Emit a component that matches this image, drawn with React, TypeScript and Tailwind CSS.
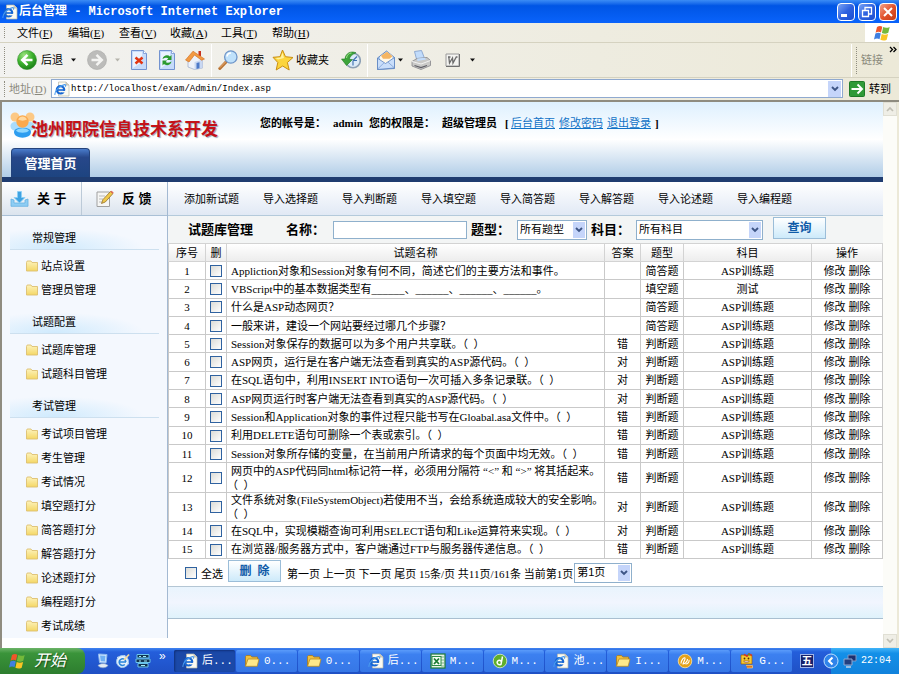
import type { ReactNode } from "react";

const menus = [
  ["文件", "F"],
  ["编辑", "E"],
  ["查看", "V"],
  ["收藏", "A"],
  ["工具", "T"],
  ["帮助", "H"],
];

const sections = [
  { title: "常规管理", items: ["站点设置", "管理员管理"] },
  { title: "试题配置", items: ["试题库管理", "试题科目管理"] },
  {
    title: "考试管理",
    items: [
      "考试项目管理",
      "考生管理",
      "考试情况",
      "填空题打分",
      "简答题打分",
      "解答题打分",
      "论述题打分",
      "编程题打分",
      "考试成绩",
    ],
  },
];

const navLinks = [
  "添加新试题",
  "导入选择题",
  "导入判断题",
  "导入填空题",
  "导入简答题",
  "导入解答题",
  "导入论述题",
  "导入编程题",
];

const questions = [
  { text: "Appliction对象和Session对象有何不同，简述它们的主要方法和事件。", answer: "", type: "简答题", subject: "ASP训练题" },
  { text: "VBScript中的基本数据类型有______、______、______、______。", answer: "", type: "填空题", subject: "测试" },
  { text: "什么是ASP动态网页？", answer: "", type: "简答题", subject: "ASP训练题" },
  { text: "一般来讲，建设一个网站要经过哪几个步骤？", answer: "", type: "简答题", subject: "ASP训练题" },
  { text: "Session对象保存的数据可以为多个用户共享联。（  ）", answer: "错", type: "判断题", subject: "ASP训练题" },
  { text: "ASP网页，运行是在客户端无法查看到真实的ASP源代码。（  ）", answer: "对", type: "判断题", subject: "ASP训练题" },
  { text: "在SQL语句中，利用INSERT INTO语句一次可插入多条记录联。（  ）", answer: "对", type: "判断题", subject: "ASP训练题" },
  { text: "ASP网页运行时客户端无法查看到真实的ASP源代码。（  ）", answer: "对", type: "判断题", subject: "ASP训练题" },
  { text: "Session和Application对象的事件过程只能书写在Gloabal.asa文件中。（  ）", answer: "错", type: "判断题", subject: "ASP训练题" },
  { text: "利用DELETE语句可删除一个表或索引。（  ）", answer: "错", type: "判断题", subject: "ASP训练题" },
  { text: "Session对象所存储的变量，在当前用户所请求的每个页面中均无效。（  ）", answer: "错", type: "判断题", subject: "ASP训练题" },
  { text: "网页中的ASP代码同html标记符一样，必须用分隔符 “<” 和 “>” 将其括起来。", tail: "（  ）", answer: "错", type: "判断题", subject: "ASP训练题" },
  { text: "文件系统对象(FileSystemObject)若使用不当，会给系统造成较大的安全影响。", tail: "（  ）", answer: "对", type: "判断题", subject: "ASP训练题" },
  { text: "在SQL中，实现模糊查询可利用SELECT语句和Like运算符来实现。（  ）", answer: "对", type: "判断题", subject: "ASP训练题" },
  { text: "在浏览器/服务器方式中，客户端通过FTP与服务器传递信息。（  ）", answer: "错", type: "判断题", subject: "ASP训练题" },
];

const tasks = [
  { icon: <IePage />, label: "后...", active: true },
  { icon: <TaskFolder />, label: "0..." },
  { icon: <TaskFolder />, label: "0..." },
  { icon: <IePage />, label: "后..." },
  { icon: <Excel />, label: "M..." },
  { icon: <Dreamweaver />, label: "M..." },
  { icon: <IePage />, label: "池..." },
  { icon: <TaskFolder />, label: "I..." },
  { icon: <Fireworks />, label: "M..." },
  { icon: <Face />, label: "G..." },
];

/* ---------- icons ---------- */

function IePage() {
  return (
    <svg className="size-4 shrink-0" viewBox="0 0 16 16">
      <path d="M4.500 1h7.500l3 3v11H4.500z" fill="#fbfaf2" stroke="#b9b8a8" strokeWidth=".7" />
      <path d="M12 1v3h3" fill="#d8d8cc" stroke="#a9a898" strokeWidth=".6" />
      <circle cx="6.500" cy="8.800" r="3.700" fill="none" stroke="#1767d2" strokeWidth="2.200" />
      <path d="M8 9.800h4v1.600H8z" fill="#fbfaf2" />
      <path d="M3 9h7.800" stroke="#1767d2" strokeWidth="1.600" />
      <path d="M1 13.800C.300 10.500 5 4.800 10.500 3.600c1.200-.1 1.500.8.8 2" fill="none" stroke="#4a9bee" strokeWidth="1.100" />
    </svg>
  );
}

function TaskFolder() {
  return (
    <svg className="size-4 shrink-0" viewBox="0 0 16 16">
      <path d="M1.500 13V3.500l1-1h4l1.300 1.500h5.700V6" fill="#f0c040" stroke="#a8791a" strokeWidth=".8" />
      <path d="M1.500 13.300 4 6h11l-1.800 7.300z" fill="#ffe98a" stroke="#b88a22" strokeWidth=".8" />
    </svg>
  );
}

function Excel() {
  return (
    <svg className="size-4 shrink-0" viewBox="0 0 16 16">
      <rect x="1" y="1" width="14" height="14" fill="#e9f4e6" stroke="#1f7a38" strokeWidth="1.200" />
      <path d="M11 4h3M11 7h3M11 10h3M11 13h3" stroke="#7ab48a" />
      <rect x="2" y="3.500" width="9" height="9" fill="#f7fff5" stroke="#2d8a45" />
      <path d="M4 5.500 9 11M9 5.500 4 11" stroke="#1c7a33" strokeWidth="1.800" />
    </svg>
  );
}

function Dreamweaver() {
  return (
    <svg className="size-4 shrink-0" viewBox="0 0 16 16">
      <circle cx="8" cy="8" r="6.800" fill="#5fae2c" stroke="#dff0c8" strokeWidth=".8" />
      <path d="M10.500 3.500 9 11.500C5 12.500 4 8.500 6.500 7.500c1.200-.5 2.300 0 2.600 1" fill="none" stroke="#fff" strokeWidth="1.500" />
    </svg>
  );
}

function Fireworks() {
  return (
    <svg className="size-4 shrink-0" viewBox="0 0 16 16">
      <circle cx="8" cy="8" r="6.800" fill="#e5a21a" stroke="#fbe6a8" strokeWidth=".8" />
      <path d="M4 10.500C4 7 7 4 8 5c.8 1-1.600 3.500-2 6 2-.2 4.500-2.500 4.500-5M8.500 11c2.500 0 4-2.500 3.500-4" fill="none" stroke="#fff" strokeWidth="1.100" />
    </svg>
  );
}

function Face() {
  return (
    <svg className="size-4 shrink-0" viewBox="0 0 16 16">
      <path d="M2 2h4l2 1.500L10 1l3 1.500V11H2z" fill="#f7c92c" stroke="#9a5a10" strokeWidth=".7" />
      <path d="M5 1.500 8 3l2-2 3 1.500" stroke="#d63a20" strokeWidth="1.500" fill="none" />
      <path d="M9 1.200l2 1" stroke="#3fa33a" strokeWidth="1.500" />
      <circle cx="5.500" cy="5.500" r=".9" fill="#5a2d08" />
      <circle cx="9.500" cy="5.500" r=".9" fill="#5a2d08" />
      <path d="M4.500 8c1.500 2 4.500 2 6 0z" fill="#fff" stroke="#8a3a10" strokeWidth=".6" />
      <path d="M7 12.500h6.500V15H8" fill="#e0761c" stroke="#f4d080" strokeWidth=".7" />
    </svg>
  );
}

function WinFlag({ className }: { className: string }) {
  return (
    <svg className={className} viewBox="0 0 18 17">
      <path d="M4 2.500C6 1 8 1.300 9.300 2.200L8 8C6.500 7 4.500 7 2.600 8.200z" fill="#f0562a" />
      <path d="M10.200 2.600c2 1 4.200 1 6.500-.2L15.300 8.300c-2.300 1.200-4.500 1-6.400.1z" fill="#74b93a" />
      <path d="M2.400 9C4.400 7.900 6.400 7.900 7.800 8.900L6.500 14.700C5 13.700 3 13.700 1 14.900z" fill="#3f7fe0" />
      <path d="M8.700 9.400c2 1 4.200 1 6.400 0l-1.400 5.800c-2.200 1.200-4.400 1-6.300 0z" fill="#f9c524" />
    </svg>
  );
}

function BackIcon() {
  return (
    <svg className="size-5" viewBox="0 0 20 20">
      <defs>
        <radialGradient id="back" cx=".35" cy=".25" r=".8">
          <stop offset="0" stopColor="#9be27f" />
          <stop offset=".55" stopColor="#3bb02c" />
          <stop offset="1" stopColor="#1b7d18" />
        </radialGradient>
      </defs>
      <circle cx="10" cy="10" r="9.500" fill="url(#back)" stroke="#2d8f27" strokeWidth=".6" />
      <path d="M10.500 4.800 5.200 10l5.300 5.200M5.500 10H15.500" fill="none" stroke="#fff" strokeWidth="2.500" />
    </svg>
  );
}

function ForwardIcon() {
  return (
    <svg className="size-5" viewBox="0 0 20 20">
      <circle cx="10" cy="10" r="9.500" fill="#bcbcba" stroke="#a8a8a6" strokeWidth=".6" />
      <path d="M9.500 4.800 14.800 10l-5.300 5.200M14.500 10H4.500" fill="none" stroke="#f4f4f2" strokeWidth="2.500" />
    </svg>
  );
}

function PageIcon({ children }: { children: ReactNode }) {
  return (
    <svg className="h-5 w-4" viewBox="0 0 16 20">
      <path d="M.5.500h12l3 3v16H.5z" fill="#c6dbfa" stroke="#7393d0" />
      <path d="M2 2h9v10L2 18z" fill="#f3f8ff" opacity=".8" />
      <path d="M12.500.500v3h3" fill="#fff" stroke="#7393d0" strokeWidth=".8" />
      {children}
    </svg>
  );
}

function HomeIcon() {
  return (
    <svg className="size-5" viewBox="0 0 20 20">
      <path d="M13.500 1h2.500v5h-2.500z" fill="#c8321c" />
      <path d="M3 10 10 3.500l7.500 6V18l-8 1.500L3 17z" fill="#eef2fa" stroke="#8a9cc0" strokeWidth=".6" />
      <path d="M9.500 12 17.500 9.500V18l-8 1.500z" fill="#c9d8f2" />
      <path d="M11.500 13l3-.7v6l-3 .7z" fill="#4d79c8" />
      <path d="M.5 10 8 1.200 19.500 9l-3 1.200L9.500 5 4 12z" fill="#f39a42" stroke="#cc6a1a" strokeWidth=".6" />
    </svg>
  );
}

function SearchIcon() {
  return (
    <svg className="size-5" viewBox="0 0 20 20">
      <path d="M8 12 1.800 18.500" stroke="#b87333" strokeWidth="3" strokeLinecap="round" />
      <path d="M8 11.500 2 17.500" stroke="#edb27c" strokeWidth="1" strokeLinecap="round" />
      <circle cx="12.800" cy="7" r="6.200" fill="#bfe1fb" stroke="#6f95c8" strokeWidth="1.300" />
      <path d="M9 6.500a4 4 0 0 1 4-3.500" stroke="#fff" strokeWidth="1.700" fill="none" />
    </svg>
  );
}

function StarIcon() {
  return (
    <svg className="size-[22px]" viewBox="0 0 22 22">
      <path d="M10.500 1l3 6.700 7.500.8-5.600 5 1.800 7.500-6.500-4-6.500 4 1.600-7.500L1 8.300l7-.6z" fill="#fcd53c" stroke="#c98e12" strokeLinejoin="round" />
      <path d="M10.500 3.500 12 9l-6 1.500L3.500 9l5.200-.5z" fill="#fff2a0" />
    </svg>
  );
}

function HistoryIcon() {
  return (
    <svg className="size-5" viewBox="0 0 20 20">
      <circle cx="12" cy="10.500" r="7.300" fill="#dcebf8" stroke="#8da0b4" strokeWidth="1.600" />
      <path d="M12 10.500 16 6.500M12 10.500h4M12 10.500v5" stroke="#3b6fb0" strokeWidth="1.100" />
      <path d="M15 2.800C9.500.5 4.500 3.500 4 9H.5l5 6.500L11.500 9.500H8.300C8.800 6.500 11 4.500 15 2.800z" fill="#3da43a" stroke="#1c7a22" strokeWidth=".6" />
      <path d="M5.500 8c.2-3 2.500-5 5-5" stroke="#9fe08a" fill="none" />
    </svg>
  );
}

function MailIcon() {
  return (
    <svg className="size-5" viewBox="0 0 20 20">
      <path d="M1.500 8 10.500 1l8 6.500v11l-17 1z" fill="#a8c8f0" stroke="#5d84bf" strokeWidth=".9" />
      <path d="M4 6.500 11 1.800l5.500 4.500V11l-6.300 4L4 12z" fill="#fff8e8" />
      <path d="M5 5.800 11 1.800l5.500 4.400-3 2.600H7z" fill="#f5b562" />
      <path d="M1.500 8.200 9.500 13.500 18.500 7.500V18l-17 1.500z" fill="#c9defa" stroke="#5d84bf" strokeWidth=".8" />
      <path d="M1.700 19 8 12.800M18.300 17.800 12 12.200" stroke="#7da0d4" strokeWidth=".8" />
    </svg>
  );
}

function PrintIcon() {
  return (
    <svg className="size-5" viewBox="0 0 20 20">
      <path d="M3.500 1.500 10.500.500 14 9.500 6 11z" fill="#c2dcfb" stroke="#7f9cc9" strokeWidth=".8" />
      <path d="M1 11.500 6 8.500l10-1 3.500 3v5L10 19.500l-9-3.500z" fill="#c9c9c7" stroke="#85858a" strokeWidth=".8" />
      <path d="M6 8.500 14 7.700 15 9.500 6.500 11z" fill="#c2dcfb" />
      <path d="M1 11.500 10 14l9.500-3.500" fill="none" stroke="#f2f2f2" />
      <path d="M3.500 15.500 10 17.500l6-2" stroke="#5f5f66" strokeWidth="1.200" fill="none" />
    </svg>
  );
}

function WordIcon() {
  return (
    <svg className="h-4 w-[15px]" viewBox="0 0 15 16">
      <path d="M1 2h13v12H1z" fill="#f3f3f0" stroke="#9a9a9a" />
      <path d="M14.500 2v12.500H1" stroke="#6f6f6f" fill="none" />
      <path d="M3 5h2.500M3.800 5 4.500 11l3-5 .5 5 3.300-6h1.200" stroke="#6a6a6a" strokeWidth="1.300" fill="none" />
    </svg>
  );
}

function Caret({ dim }: { dim?: boolean }) {
  return (
    <svg className="h-1 w-[5px]" viewBox="0 0 5 4">
      <path d="M0 .5h5L2.500 3.500z" fill={dim ? "#b5b4ac" : "#111"} />
    </svg>
  );
}

function Chevron() {
  return (
    <svg className="size-2" viewBox="0 0 8 8">
      <path d="M1 2l3 3 3-3" fill="none" stroke="#3d5585" strokeWidth="1.900" />
    </svg>
  );
}

function SideFolder() {
  return (
    <svg className="h-3 w-3" viewBox="0 0 12 12">
      <defs>
        <linearGradient id="folder" x1="0" y1="0" x2="0" y2="1">
          <stop offset="0" stopColor="#fdf3bd" />
          <stop offset="1" stopColor="#f4d765" />
        </linearGradient>
      </defs>
      <path d="M.5 2.500 1.200 1H5l1 1.500h5.500v8.500H.5z" fill="url(#folder)" stroke="#dcbf70" strokeWidth=".9" />
    </svg>
  );
}

function PeopleLogo() {
  return (
    <svg className="h-[26px] w-[25px] shrink-0" viewBox="0 0 25 26">
      <path d="M.5 14c0-5 9-6 10-1l-2 6C4 19 .5 18 .5 14zM24.500 14c0-5-9-6-10-1l2 6c4.500 0 8-1 8-5z" fill="#a9dcfc" />
      <circle cx="5" cy="5" r="4.500" fill="#fcc985" />
      <circle cx="20" cy="5" r="4.500" fill="#fcc985" />
      <path d="M4 20c0-6 17-6 17 0 0 7.500-17 7.500-17 0z" fill="#2d9df0" />
      <path d="M6 18.500c3-3 10-3 13 0-2 3-11 3-13 0z" fill="#8fd8ff" />
      <circle cx="12.500" cy="9.500" r="6.200" fill="#fba94c" />
      <path d="M8 7.500c2-4 7-4 9 0-3 1.500-6 1.500-9 0z" fill="#ffd9a0" />
    </svg>
  );
}

function DownloadIcon() {
  return (
    <svg className="h-4 w-[19px]" viewBox="0 0 19 16">
      <path d="M1 8v7.300h17V8l-3 1v3H4V9z" fill="#8ecdf4" stroke="#65b1e2" strokeWidth=".8" />
      <path d="M7.500.500h4v6H15L9.500 12 4 6.500h3.500z" fill="#3fa3e2" stroke="#8dd0f6" strokeWidth=".8" />
    </svg>
  );
}

function NoteIcon() {
  return (
    <svg className="size-[18px]" viewBox="0 0 18 18">
      <path d="M1 2h12.500v14.500H1z" fill="#f6f6f4" stroke="#a0a0a0" />
      <path d="M3 6h6M3 9h4M3 12h3" stroke="#bbb" />
      <path d="M5.500 13.500 7 9.500 14.500 1.500l2.500 2L9.300 12z" fill="#f0c94a" stroke="#94702a" strokeWidth=".8" />
      <path d="M14.200 1.700 15.500.800 17.700 2.600 16.600 3.800z" fill="#e06a5a" />
    </svg>
  );
}

/* ---------- small parts ---------- */

function Separator() {
  return <span className="h-full w-px border-r border-white bg-[#cfccba]" />;
}

function Dropdown({ label, value, className }: { label: string; value: string; className: string }) {
  return (
    <span className={`relative inline-flex h-5 ${className}`}>
      <select
        aria-label={label}
        className="h-full w-full appearance-none border border-[#8fb0cc] bg-white pl-0.5 font-['Liberation_Sans','Noto_Sans_CJK_SC',sans-serif] text-[11px] leading-none text-black outline-none"
      >
        <option>{value}</option>
      </select>
      <span className="pointer-events-none absolute top-0.5 right-0.5 bottom-0.5 flex w-3 items-center justify-center bg-[#c5d5fa]">
        <Chevron />
      </span>
    </span>
  );
}

function Tick({ label, id }: { label?: string; id?: string }) {
  return (
    <input
      id={id}
      type="checkbox"
      aria-label={label}
      className="size-3 shrink-0 appearance-none border border-[#2f62a0] bg-linear-to-br from-[#dcdcd7] to-white align-middle"
    />
  );
}

/* ---------- browser chrome ---------- */

function TitleBar() {
  return (
    <header className="flex h-[23px] shrink-0 items-center bg-linear-to-b from-[#3b8cf5] via-[#0055e5] via-25% to-[#0a63fb] pr-0.5 pl-0.5 text-white">
      <IePage />
      <h1 className="flex-1 pl-px font-['Liberation_Mono','Noto_Sans_CJK_SC',monospace] text-[12px] font-bold whitespace-pre">
        后台管理 - Microsoft Internet Explorer
      </h1>
      <div className="flex gap-[3px]">
        <button aria-label="最小化" className="flex size-[18px] items-end rounded-sm border border-white bg-linear-to-br from-[#7ba3f5] via-[#2f62e0] to-[#1c4fd0] p-[3px]">
          <span className="h-[3px] w-[6px] bg-white" />
        </button>
        <button aria-label="还原" className="flex size-[18px] items-center justify-center rounded-sm border border-white bg-linear-to-br from-[#7ba3f5] via-[#2f62e0] to-[#1c4fd0]">
          <svg className="size-3" viewBox="0 0 12 12" fill="none" stroke="#fff">
            <path d="M4 4V1.500h6.500V8H8" strokeWidth="1.300" />
            <path d="M1.500 4.500h6v6h-6z" strokeWidth="1.300" />
          </svg>
        </button>
        <button aria-label="关闭" className="flex size-[18px] items-center justify-center rounded-sm border border-white bg-linear-to-br from-[#f0a088] via-[#e2532c] to-[#c63a12]">
          <svg className="size-3" viewBox="0 0 12 12">
            <path d="M2 2l8 8M10 2l-8 8" stroke="#fff" strokeWidth="2" />
          </svg>
        </button>
      </div>
    </header>
  );
}

function MenuBar() {
  return (
    <nav className="flex h-5 shrink-0 border-b border-[#d5d2c0] pl-1">
      <span className="my-1 w-px border-l border-dotted border-[#8f8d80]" />
      <ul className="flex flex-1 items-center pl-3 font-['Liberation_Serif','Noto_Sans_CJK_SC',serif]">
        {menus.map(([name, key]) => (
          <li key={key} className="w-[51px]">
            <button>
              {name}(<u>{key}</u>)
            </button>
          </li>
        ))}
      </ul>
      <div className="flex w-[34px] items-center justify-center bg-white">
        <WinFlag className="size-[18px]" />
      </div>
    </nav>
  );
}

function ToolBar() {
  return (
    <div className="flex h-[35px] shrink-0 items-center border-b border-[#d5d2c0] pl-1">
      <span className="h-[27px] w-px border-l border-dotted border-[#8f8d80]" />
      <button className="ml-3 flex items-center gap-1">
        <BackIcon />
        后退
      </button>
      <span className="ml-2 flex w-[14px]"><Caret /></span>
      <button aria-label="前进" className="ml-0.5"><ForwardIcon /></button>
      <span className="ml-2 flex w-4"><Caret dim /></span>
      <button aria-label="停止">
        <PageIcon>
          <path d="M4.500 7.500l7 6M11.500 7.500l-7 6" stroke="#e23512" strokeWidth="2.500" />
        </PageIcon>
      </button>
      <button aria-label="刷新" className="ml-3">
        <PageIcon>
          <path d="M3.500 9c.8-4 5.500-4.500 7.500-2.500l1.500-1.500V10H7.800l1.500-1.600C8 7.200 6 7.500 3.500 9z" fill="#2b9a2e" />
          <path d="M12.500 11.500c-.8 4-5.500 4.500-7.500 2.500l-1.500 1.500v-5h4.700L6.700 12c1.300 1.200 3.300 1 5.800-.5z" fill="#2b9a2e" />
        </PageIcon>
      </button>
      <button aria-label="主页" className="ml-2.5"><HomeIcon /></button>
      <span className="ml-1.5 flex h-[33px]"><Separator /></span>
      <button className="ml-1.5 flex items-center gap-1">
        <SearchIcon />
        搜索
      </button>
      <button className="ml-2 flex items-center gap-0.5">
        <StarIcon />
        收藏夹
      </button>
      <button aria-label="历史" className="ml-3"><HistoryIcon /></button>
      <span className="ml-1.5 flex h-[33px]"><Separator /></span>
      <button aria-label="邮件" className="ml-2 flex items-center gap-0.5">
        <MailIcon />
        <Caret />
      </button>
      <button aria-label="打印" className="ml-2"><PrintIcon /></button>
      <button aria-label="编辑" className="ml-3.5 flex items-center gap-2.5">
        <WordIcon />
        <Caret />
      </button>
      <div className="ml-auto flex h-[33px] items-center gap-1">
        <Separator />
        <span className="h-[27px] w-px border-l border-dotted border-[#8f8d80]" />
        <span className="text-[#8b897c]">链接</span>
        <svg className="mx-0.5 mt-0.5 size-2 self-start" viewBox="0 0 8 8">
          <path d="M1 1l2.500 2.500L1 6M4.500 1 7 3.500 4.500 6" fill="none" stroke="#000" strokeWidth="1.300" />
        </svg>
      </div>
    </div>
  );
}

function AddressBar() {
  return (
    <div className="flex h-[21px] shrink-0 items-center py-px pl-1">
      <span className="h-4 w-px border-l border-dotted border-[#8f8d80]" />
      <label htmlFor="address" className="w-[46px] pl-1 font-['Liberation_Serif','Noto_Sans_CJK_SC',serif] text-[#8b897c]">
        地址(<u>D</u>)
      </label>
      <div className="flex h-[19px] flex-1 items-center border border-[#8fa9cf] bg-white pl-0.5">
        <IePage />
        <input
          id="address"
          defaultValue="http://localhost/exam/Admin/Index.asp"
          className="w-full flex-1 pl-px font-['Liberation_Mono',monospace] text-[9px] text-black outline-none"
        />
        <span className="mr-px flex h-4 w-[13px] items-center justify-center bg-[#c5d5fa]">
          <Chevron />
        </span>
      </div>
      <button className="flex items-center gap-1 pr-2 pl-1.5">
        <svg className="size-4" viewBox="0 0 16 16">
          <rect x=".5" y=".5" width="15" height="15" rx="1" fill="#2f9a38" stroke="#1e7a28" />
          <path d="M2.500 8H13M8.500 3.500 13 8l-4.500 4.500" fill="none" stroke="#fff" strokeWidth="1.900" />
        </svg>
        转到
      </button>
    </div>
  );
}

/* ---------- page ---------- */

function PageHeader() {
  return (
    <div className="border-b-[5px] border-[#1f3c70] bg-linear-to-b from-[#def0fe] via-white via-50% to-[#b1cde7]">
      <div className="flex h-[46px] items-start pl-2">
        <div className="flex w-[250px] pt-2.5">
          <PeopleLogo />
          <span className="-ml-1 pt-2 text-[17px] leading-5 font-bold whitespace-nowrap text-[#c41218] [text-shadow:1px_1px_1px_#9aa8b8]">
            池州职院信息技术系开发
          </span>
        </div>
        <p className="flex pt-3.5 font-['Liberation_Serif','Noto_Sans_CJK_SC',serif] font-bold">
          <span className="w-[73px]">您的帐号是：</span>
          <span className="w-9">admin</span>
          <span className="w-[73px]">您的权限是：</span>
          <span className="w-[63px]">超级管理员</span>
          <span className="w-1.5">[</span>
          {["后台首页", "修改密码", "退出登录"].map((t) => (
            <a key={t} href="#" className="mr-1 font-normal text-[#1173c7] underline">
              {t}
            </a>
          ))}
          ]
        </p>
      </div>
      <div className="flex h-[29px] pl-[9px]">
        <a href="#" className="flex w-[79px] items-center justify-center rounded-t border border-b-0 border-[#24437c] bg-linear-to-b from-[#4a7ccc] via-[#27478a] via-30% to-[#1d4480] pt-0.5 text-[13px] font-bold text-white">
          管理首页
        </a>
      </div>
    </div>
  );
}

function Sidebar() {
  return (
    <aside className="flex w-[166px] shrink-0 flex-col border-r border-[#a3b9d2] bg-[#f4f8fe]">
      <div className="flex h-[34px] border-b border-[#a9c0d6] bg-linear-to-b from-white to-[#dbe4ee] text-[13px] font-bold">
        <a href="#" className="flex w-20 items-center gap-2 border-r border-[#bccad8] pl-2 whitespace-pre">
          <DownloadIcon />
          关 于
        </a>
        <a href="#" className="flex flex-1 items-center gap-2 pl-3.5 whitespace-pre">
          <NoteIcon />
          反 馈
        </a>
      </div>
      <div className="pt-0.5">
        {sections.map((s) => (
          <section key={s.title} className="pt-2">
            <h2 className="mx-2 flex h-6 items-center border-b border-[#cde0ef] bg-[radial-gradient(ellipse_60%_90%_at_30%_100%,#cfeafd,#f4f8fe)] pl-[22px]">
              {s.title}
            </h2>
            <ul className="pt-1">
              {s.items.map((t) => (
                <li key={t}>
                  <a href="#" className="flex h-6 items-center gap-[3px] pl-6">
                    <SideFolder />
                    {t}
                  </a>
                </li>
              ))}
            </ul>
          </section>
        ))}
      </div>
    </aside>
  );
}

function FilterBar() {
  return (
    <form className="flex h-[27px] items-center bg-[#f3f5f5] pl-5 text-[13px] font-bold">
      <h2 className="w-[98px]">试题库管理</h2>
      <label htmlFor="name" className="w-[47px] whitespace-nowrap">名称：</label>
      <input id="name" className="h-[18px] w-[134px] border border-[#8fb0cc] bg-white px-1 font-normal" />
      <span className="ml-1 w-[46px] whitespace-nowrap">题型：</span>
      <Dropdown label="题型" value="所有题型" className="w-[70px] font-normal" />
      <span className="ml-1 w-[45px] whitespace-nowrap">科目：</span>
      <Dropdown label="科目" value="所有科目" className="w-[127px] font-normal" />
      <button type="button" className="mb-1 ml-2.5 h-[22px] w-[53px] border border-[#9bbdd8] bg-linear-to-b from-white to-[#cdeafa] text-[12px] text-[#0f5ba8]">
        查询
      </button>
    </form>
  );
}

function QuestionTable() {
  return (
    <table className="h-[316px] w-full table-fixed border-collapse text-center leading-[14px] [&_td]:border [&_td]:border-[#c9c9c9] [&_td]:p-0 [&_th]:border [&_th]:border-[#d3d3d3] [&_th]:p-0 [&_th]:font-normal">
      <colgroup>
        <col className="w-[37px]" />
        <col className="w-[21px]" />
        <col />
        <col className="w-9" />
        <col className="w-[43px]" />
        <col className="w-32" />
        <col className="w-[71px]" />
      </colgroup>
      <thead>
        <tr className="h-[18px] bg-linear-to-b from-white to-[#ececec]">
          {["序号", "删", "试题名称", "答案", "题型", "科目", "操作"].map((h) => (
            <th key={h}>{h}</th>
          ))}
        </tr>
      </thead>
      <tbody className="bg-white">
        {questions.map((q, i) => (
          <tr key={i} className="h-[18px]">
            <td>{i + 1}</td>
            <td className="leading-none"><Tick label={`选择第${i + 1}题`} /></td>
            <td className="text-left">
              <span className="block pl-1 whitespace-pre">{q.text}</span>
              {q.tail && <span className="block whitespace-pre">{q.tail}</span>}
            </td>
            <td>{q.answer}</td>
            <td>{q.type}</td>
            <td>{q.subject}</td>
            <td className="whitespace-pre">
              <a href="#">修改</a> <a href="#">删除</a>
            </td>
          </tr>
        ))}
      </tbody>
    </table>
  );
}

function Pager() {
  return (
    <div className="flex h-7 items-center border-b border-[#b4c6d4] pl-[17px]">
      <Tick id="all" />
      <label htmlFor="all" className="w-[31px] shrink-0 pt-0.5 pl-1 whitespace-nowrap">全选</label>
      <button className="mb-1 h-[22px] w-[53px] shrink-0 border border-[#9bbdd8] bg-linear-to-b from-white to-[#cdeafa] text-[12px] font-bold whitespace-pre text-[#0f5ba8]">
        删  除
      </button>
      <p className="mr-px ml-1.5 pt-0.5 whitespace-nowrap">
        <a href="#">第一页</a> <a href="#">上一页</a> <a href="#">下一页</a> <a href="#">尾页</a> 15条/页 共11页/161条 当前第1页
      </p>
      <Dropdown label="页码" value="第1页" className="w-[58px]" />
    </div>
  );
}

function TaskBar() {
  return (
    <footer className="flex h-[26px] shrink-0 bg-linear-to-b from-[#3f83f0] via-[#245edb] via-15% to-[#1f50c4] text-white">
      <button className="flex w-[85px] items-center gap-2 rounded-r-lg bg-linear-to-b from-[#6cb468] via-[#3a943a] via-20% to-[#2d7d2e] pl-2 text-[16px] italic [text-shadow:1px_1px_1px_#1d4f1d]">
        <WinFlag className="size-[18px]" />
        开始
      </button>
      <div className="flex w-[89px] items-center gap-1 pl-2.5">
        <svg className="size-4" viewBox="0 0 16 16">
          <path d="M3.500 1 12 1.500 11 10l-6.500-.5z" fill="#d9ecff" stroke="#8cb8ee" />
          <path d="M5 2.500l5.500.3L10 8.500l-4.300-.3z" fill="#6fb0f4" />
          <path d="M3 12.500c2-2.500 8-2.500 10 0-2 3-8 3-10 0z" fill="#e4ecf4" stroke="#8aa4c4" strokeWidth=".6" />
        </svg>
        <svg className="size-4" viewBox="0 0 16 16">
          <path d="M2 4l8-2 4 9-8 4z" fill="#f2f8fd" />
          <circle cx="7.500" cy="8.500" r="6" fill="#e8f2fb" stroke="#9cc6ee" />
          <path d="M4.500 9h6.500M10.800 9a3.300 3.300 0 1 0-1 2.500" stroke="#2a86dc" strokeWidth="1.600" fill="none" />
          <path d="M9 7l5-5.500" stroke="#f2d59a" strokeWidth="1.800" />
        </svg>
        <svg className="size-4" viewBox="0 0 16 16">
          <path d="M2 1.500h12v3.500H2zM1 6h14v3.500H1zM3 10.500h10V14H3z" fill="#12324f" stroke="#6ac4ea" />
          <path d="M4 3.500h2M8 3.500h3M4 8h2M9 8h3M6 12.500h4" stroke="#a5ecf6" />
        </svg>
        <span className="ml-1 self-start text-[12px] leading-4">»</span>
      </div>
      <ul className="flex flex-1 gap-px py-0.5 font-['Liberation_Mono','Noto_Sans_CJK_SC',monospace]">
        {tasks.map((t, i) => (
          <li key={i} className="flex min-w-0 flex-1">
            <button
              className={`flex flex-1 items-center gap-1 rounded-xs pl-2 ${
                t.active ? "bg-[#1b49a8] shadow-[inset_1px_1px_2px_#10307c]" : "bg-linear-to-b from-[#5a9bfa] via-[#3c80f0] via-20% to-[#3677e6]"
              }`}
            >
              {t.icon}
              {t.label}
            </button>
          </li>
        ))}
      </ul>
      <div className="flex w-[39px] items-center pl-2">
        <span className="flex size-[14px] items-center justify-center border border-[#9fb4e8] bg-[#16206c] text-[11px] font-bold">五</span>
      </div>
      <div className="flex w-[68px] items-center gap-1 bg-linear-to-b from-[#3fb4f8] via-[#1390e8] via-20% to-[#1182dc]">
        <svg className="-ml-2 size-4 shrink-0" viewBox="0 0 16 16">
          <circle cx="8" cy="8" r="7" fill="#2f84ea" stroke="#bfe0ff" />
          <path d="M9.500 4.500 6 8l3.500 3.500" fill="none" stroke="#fff" strokeWidth="2" />
        </svg>
        <svg className="size-3.5 shrink-0" viewBox="0 0 14 14">
          <path d="M5 1h8v6H5z" fill="#1c2f6e" stroke="#7f98c4" />
          <path d="M1 5h8v6H1z" fill="#22407f" stroke="#8fa8d2" />
          <path d="M3 13h5" stroke="#c5d0e4" strokeWidth="1.500" />
        </svg>
        <time className="font-['Liberation_Mono',monospace] text-[10px]">22:04</time>
      </div>
    </footer>
  );
}

export default function App() {
  return (
    <div className="flex h-screen flex-col overflow-hidden bg-linear-to-r from-[#f2f2f0] to-[#ece9d8] font-['Liberation_Sans','Noto_Sans_CJK_SC',sans-serif] text-[11px] leading-[14px] text-black">
      <TitleBar />
      <MenuBar />
      <ToolBar />
      <AddressBar />
      <div className="mt-px flex min-h-0 flex-1 border-t-2 border-l-2 border-[#8f8c80] bg-white">
        <div className="min-w-0 flex-1 overflow-hidden">
          <PageHeader />
          <div className="flex items-start">
            <Sidebar />
            <main className="min-w-0 flex-1 font-['Liberation_Serif','Noto_Sans_CJK_SC',serif]">
              <nav className="flex h-[34px] items-center border-b border-[#b4cadb] bg-linear-to-b from-white to-[#e1e9f5] pl-4">
                {navLinks.map((t) => (
                  <a key={t} href="#" className="w-[79px]">
                    {t}
                  </a>
                ))}
              </nav>
              <FilterBar />
              <QuestionTable />
              <Pager />
              <div className="h-8 border-b border-[#a9bfd0] bg-linear-to-b from-[#e9f4fd] via-[#f1f5fe] to-[#dff2fb]" />
            </main>
          </div>
        </div>
        <div className="flex w-[14px] shrink-0 flex-col justify-between bg-[#fcfcf8]">
          <button aria-label="向上滚动" className="flex h-[14px] items-center justify-center border border-[#e0dfd4] bg-[#efeee6]">
            <svg className="size-2" viewBox="0 0 8 8"><path d="M1 6l3-3 3 3" fill="none" stroke="#c0bfb4" strokeWidth="1.700" /></svg>
          </button>
          <button aria-label="向下滚动" className="flex h-[14px] items-center justify-center border border-[#e0dfd4] bg-[#efeee6]">
            <svg className="size-2" viewBox="0 0 8 8"><path d="M1 2l3 3 3-3" fill="none" stroke="#c0bfb4" strokeWidth="1.700" /></svg>
          </button>
        </div>
        <div className="w-0.5 shrink-0 bg-[#ece9d8]" />
      </div>
      <TaskBar />
    </div>
  );
}
